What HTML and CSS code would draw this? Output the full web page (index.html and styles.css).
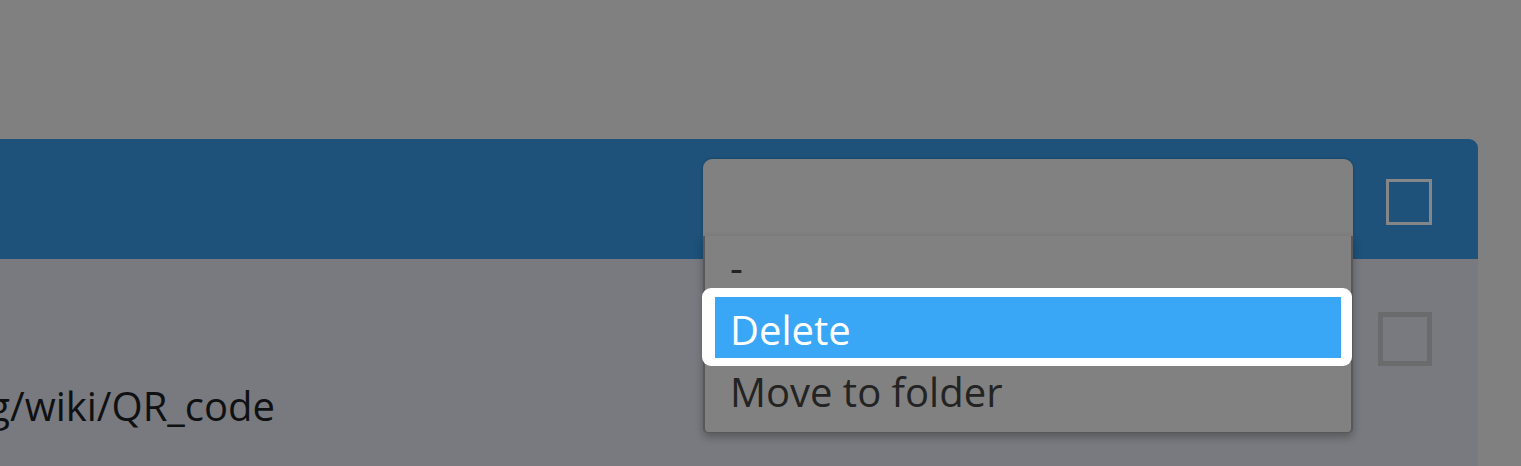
FILE: index.html
```html
<!DOCTYPE html>
<html lang="en">
<head>
<meta charset="utf-8">
<title>Links</title>
<link rel="stylesheet" href="styles.css">
</head>
<body>
<div class="page">
  <div class="panel">
    <div class="panel-head">
      <span class="check check-head"></span>
      <div class="dropdown">
        <div class="select-box"></div>
        <ul class="options">
          <li class="opt">-</li>
          <li class="opt opt-active">Delete</li>
          <li class="opt opt-last">Move to folder</li>
        </ul>
      </div>
    </div>
    <div class="row">
      <div class="row-text">
        <span class="url">https://en.wikipedia.org/wiki/QR_code</span>
      </div>
      <span class="check check-row"></span>
    </div>
  </div>
</div>
</body>
</html>
```

FILE: styles.css
```css
html, body {
  margin: 0;
  padding: 0;
}
body {
  background: #808080;
  width: 1521px;
  height: 466px;
  overflow: hidden;
  font-family: "Open Sans", "Liberation Sans", sans-serif;
  font-size: 40px;
}
.page {
  padding: 139px 43px 0 0;
}
.panel {
  width: 1478px;
}
.panel-head {
  position: relative;
  height: 120px;
  background: #1e527a;
  border-top-right-radius: 9px;
  display: flex;
  justify-content: flex-end;
  align-items: flex-start;
}
.check {
  display: block;
  box-sizing: border-box;
}
.check-head {
  width: 46px;
  height: 46px;
  margin: 40px 46px 0 0;
  border: 3px solid #858687;
}
.row {
  height: 220px;
  background: #797a7f;
  display: flex;
  align-items: flex-start;
  justify-content: space-between;
}
.row-text {
  width: 275px;
  padding-top: 119px;
  overflow: hidden;
  display: flex;
  justify-content: flex-end;
  white-space: nowrap;
  line-height: normal;
  color: #0f1011;
}
.check-row {
  width: 54px;
  height: 54px;
  margin: 53px 46px 0 0;
  border: 5px solid #6a6b6c;
}
.dropdown {
  position: absolute;
  left: 703px;
  top: 20px;
  width: 650px;
  z-index: 5;
}
.select-box {
  height: 77px;
  background: #818181;
  border-radius: 9px 9px 0 0;
  box-shadow: 0 0 3px rgba(0, 0, 0, 0.25);
}
.options {
  position: relative;
  z-index: 0;
  list-style: none;
  margin: 0;
  padding: 0 0 10px 0;
  background: #818181;
  border: 1px solid #585858;
  border-left-width: 2px;
  border-right-width: 2px;
  border-top: none;
  border-radius: 0 0 5px 5px;
  box-shadow: 0 4px 8px rgba(0, 0, 0, 0.28);
}
.opt {
  height: 61px;
  line-height: 61px;
  margin: 0 10px;
  padding-left: 15px;
  color: #232323;
  white-space: nowrap;
}
.opt-active {
  position: relative;
  box-sizing: border-box;
  padding-top: 2px;
  background: #3aa6f6;
  color: #ffffff;
}
.opt-active::before {
  content: "";
  position: absolute;
  top: -9px;
  bottom: -8px;
  left: -13px;
  right: -11px;
  background: #ffffff;
  border-radius: 9px;
  z-index: -1;
}
.opt-last {
  margin-top: 3px;
}
```
